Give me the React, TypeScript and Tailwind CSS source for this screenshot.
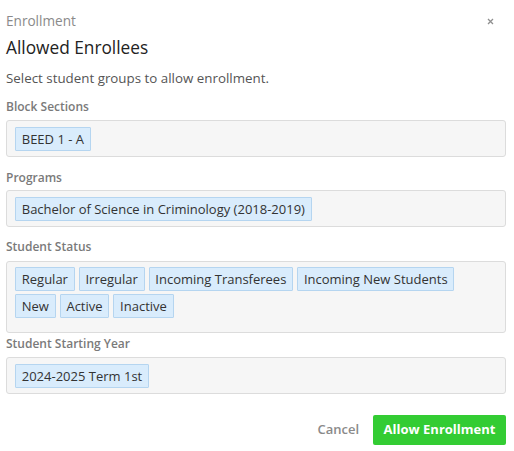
import React from "react";

const sections: { label: string; tags: string[]; className: string; boxClass: string }[] = [
  { label: "Block Sections", tags: ["BEED 1 - A"], className: "mt-[12px]", boxClass: "mt-[5px] pt-[6px] pb-[5px]" },
  { label: "Programs", tags: ["Bachelor of Science in Criminology (2018-2019)"], className: "mt-[13px]", boxClass: "mt-[4px] pt-[6px] pb-[5px]" },
  {
    label: "Student Status",
    tags: ["Regular", "Irregular", "Incoming Transferees", "Incoming New Students", "New", "Active", "Inactive"],
    className: "mt-[12px]",
    boxClass: "mt-[6px] pt-[5px] pb-[14px]",
  },
  { label: "Student Starting Year", tags: ["2024-2025 Term 1st"], className: "mt-[3px]", boxClass: "mt-[5px] pt-[6px] pb-[5px]" },
];

function Tag({ text }: { text: string }) {
  return (
    <span className="inline-block h-[24px] px-[5.75px] leading-[22px] text-[13px] text-[#333] bg-[#d9ecfc] border border-[#b5d5f0] rounded-[1px] whitespace-nowrap">
      {text}
    </span>
  );
}

export default function App() {
  return (
    <div className="w-[514px] h-[451px] bg-white pl-[6px] pr-[8px] font-['Open_Sans',sans-serif] overflow-hidden">
      {/* Header */}
      <div className="flex items-center justify-between pt-[12px] h-[30px]">
        <span className="text-[13.6px] leading-[18px] text-[#8a8a8a]">Enrollment</span>
        <svg width="7" height="7" viewBox="0 0 7 7" className="mr-[12px] mt-[1px]">
          <path d="M1 1L6 6M6 1L1 6" stroke="#8f8f8f" strokeWidth="1.3" />
        </svg>
      </div>
      <h2 className="mt-[6px] text-[17.3px] leading-[24px] text-[#222]">Allowed Enrollees</h2>
      <p className="mt-[9px] text-[13.35px] leading-[18px] text-[#555]">Select student groups to allow enrollment.</p>

      {sections.map((s) => (
        <div key={s.label} className={s.className}>
          <div className="text-[12px] leading-[16px] font-semibold text-[#7a7a7a]">{s.label}</div>
          <div
            className={`${s.boxClass} px-[8px] bg-[#f6f6f6] border border-[#dcdcdc] rounded-[3px] flex flex-wrap gap-x-[4px] gap-y-[3px]`}
          >
            {s.tags.map((t) => (
              <Tag key={t} text={t} />
            ))}
          </div>
        </div>
      ))}

      {/* Footer */}
      <div className="mt-[21px] flex items-center justify-end gap-[14px]">
        <button className="text-[13px] font-semibold text-[#8a8a8a] px-[0px]">Cancel</button>
        <button className="h-[30px] w-[133px] rounded-[2px] bg-[#33cc33] text-white text-[13px] font-bold">
          Allow Enrollment
        </button>
      </div>
    </div>
  );
}
